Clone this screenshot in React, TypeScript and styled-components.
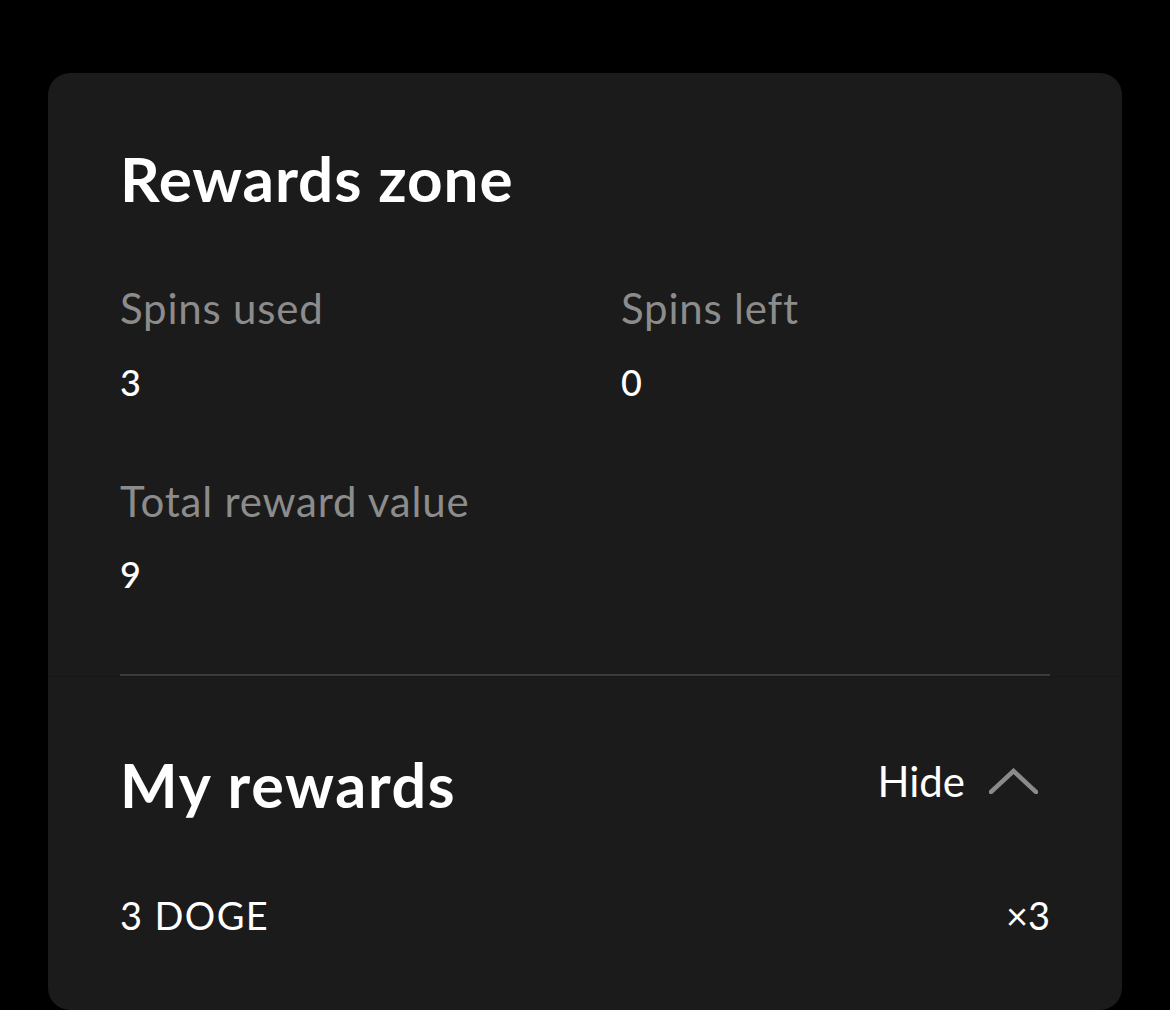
import React from "react";
import styled, { createGlobalStyle } from "styled-components";

const Global = createGlobalStyle`
  html, body { margin: 0; padding: 0; background: #000; }
  body { font-family: Lato, "Noto Sans", sans-serif; -webkit-font-smoothing: antialiased; }
  * { box-sizing: border-box; }
`;

const Page = styled.div`
  padding: 73px 48px 0 48px;
  height: 1010px;
  overflow: hidden;
`;

const Card = styled.section`
  width: 1074px;
  height: 937px;
  background: #1b1b1b;
  border-radius: 22px;
  display: flex;
  flex-direction: column;
`;

const Section = styled.div<{ $divider?: boolean }>`
  padding: 68px 72px 0 72px;
  display: flex;
  flex-direction: column;
  ${(p) => (p.$divider ? "border-bottom: 1px solid #171717;" : "")}
`;

const Title = styled.h2<{ $size?: number; $spacing?: number }>`
  margin: 0;
  font-family: Lato, "Noto Sans", sans-serif;
  font-weight: 700;
  font-size: ${(p) => p.$size ?? 62}px;
  line-height: 1.2;
  color: #fff;
  letter-spacing: ${(p) => p.$spacing ?? 0.9}px;
`;

const StatsGrid = styled.div`
  display: grid;
  grid-template-columns: 501px 1fr;
  row-gap: 72px;
  margin-top: 68px;
`;

const Stat = styled.div`
  display: flex;
  flex-direction: column;
  gap: 27px;
`;

const Label = styled.div`
  font-size: 42px;
  line-height: 1.2;
  color: #8c8c8c;
  font-weight: 400;
  letter-spacing: 0.8px;
`;

const Value = styled.div`
  font-size: 36px;
  line-height: 1.2;
  color: #fff;
  font-weight: 500;
`;

const Divider = styled.hr`
  margin: 77px 0 0 0;
  border: none;
  height: 2px;
  background: #3b3b3b;
`;

const RewardsSection = styled.div`
  padding: 71px 72px 0 72px;
  display: flex;
  flex-direction: column;
`;

const HeaderRow = styled.div`
  display: flex;
  align-items: center;
  justify-content: space-between;
`;

const Toggle = styled.button`
  display: flex;
  align-items: center;
  gap: 24px;
  background: none;
  border: none;
  padding: 0 12px 6px 0;
  cursor: pointer;
  color: #fff;
  font-family: Lato, "Noto Sans", sans-serif;
  font-size: 42px;
  line-height: 1.2;
`;

const RewardRow = styled.div`
  display: flex;
  justify-content: space-between;
  align-items: baseline;
  margin-top: 72px;
  font-size: 38px;
  line-height: 1.2;
  color: #fff;
  letter-spacing: 1.4px;
`;

const Multiplier = styled.span`
  letter-spacing: 0;
`;

const Chevron = () => (
  <svg width="49" height="26" viewBox="0 0 49 26" fill="none">
    <path d="M2 24 L24.5 3 L47 24" stroke="#8a8a8a" strokeWidth="4.5" strokeLinecap="square" />
  </svg>
);

export default function App() {
  return (
    <Page>
      <Global />
      <Card>
        <Section $divider>
          <Title>Rewards zone</Title>
          <StatsGrid>
            <Stat>
              <Label>Spins used</Label>
              <Value>3</Value>
            </Stat>
            <Stat>
              <Label>Spins left</Label>
              <Value>0</Value>
            </Stat>
            <Stat>
              <Label>Total reward value</Label>
              <Value>9</Value>
            </Stat>
          </StatsGrid>
          <Divider />
        </Section>
        <RewardsSection>
          <HeaderRow>
            <Title $size={61} $spacing={1.7}>My rewards</Title>
            <Toggle>
              Hide
              <Chevron />
            </Toggle>
          </HeaderRow>
          <RewardRow>
            <span>3 DOGE</span>
            <Multiplier>×3</Multiplier>
          </RewardRow>
        </RewardsSection>
      </Card>
    </Page>
  );
}
